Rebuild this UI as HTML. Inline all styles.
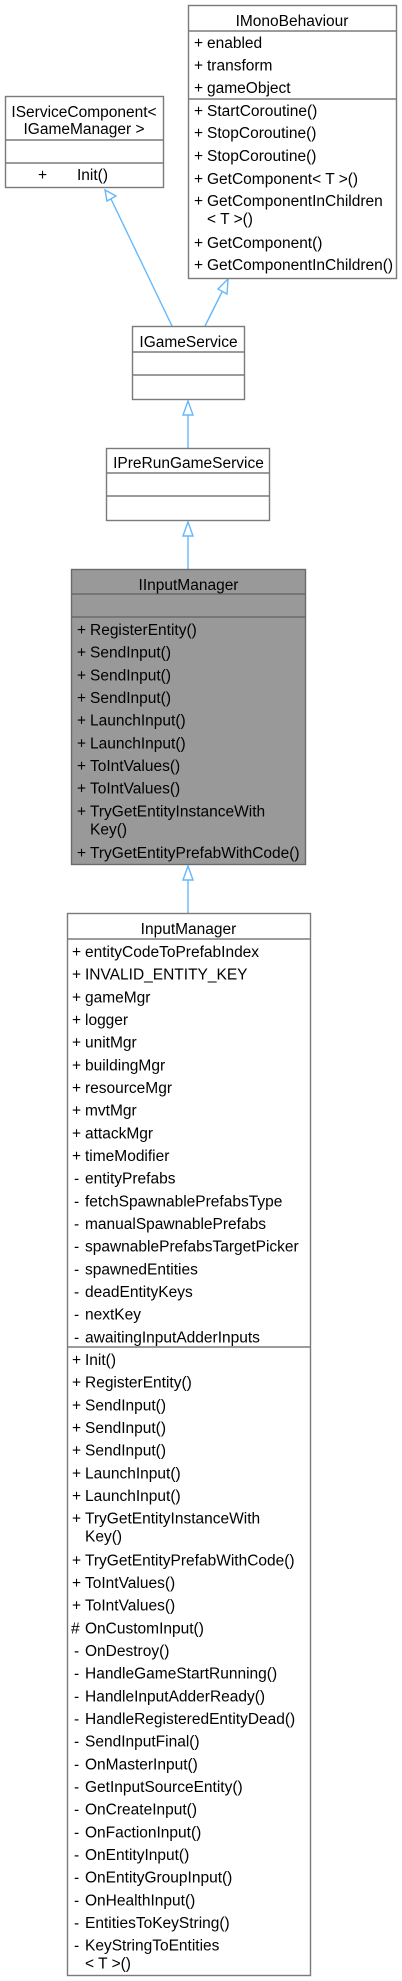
<!DOCTYPE html>
<html><head><meta charset="utf-8"><style>
html,body{margin:0;padding:0;background:#fff;}
svg{display:block;}
text{font-family:"Liberation Sans",Arial,sans-serif;font-size:15.5px;fill:#000;}
.b{fill:#fff;stroke:#7a7a7a;stroke-width:1.4;}
.g{fill:#999;stroke:#6a6a6a;stroke-width:1.4;}
.s{stroke:#7a7a7a;stroke-width:1.4;}
.s2{stroke:#6a6a6a;stroke-width:1.4;}
.e{stroke:#63b8ff;stroke-width:1.4;fill:none;}
.a{stroke:#63b8ff;stroke-width:1.4;fill:#fff;}
</style></head><body>
<svg width="402" height="1981" viewBox="0 0 402 1981" xmlns="http://www.w3.org/2000/svg">
<!-- edges -->
<line class="e" x1="111" y1="199" x2="172" y2="326"/>
<polygon class="a" points="105,190 107,201 116,196"/>
<line class="e" x1="222" y1="292" x2="205" y2="326"/>
<polygon class="a" points="228,279 218,289 227,294"/>
<line class="e" x1="188" y1="415" x2="188" y2="448"/>
<polygon class="a" points="188,401 183,415 193,415"/>
<line class="e" x1="188" y1="536" x2="188" y2="569"/>
<polygon class="a" points="188,522 183,536 193,536"/>
<line class="e" x1="188" y1="880" x2="188" y2="913"/>
<polygon class="a" points="188,866 183,880 193,880"/>

<!-- IMonoBehaviour -->
<rect class="b" x="188.5" y="5.5" width="208" height="273"/>
<line class="s" x1="188" y1="31" x2="396" y2="31"/>
<line class="s" x1="188" y1="99" x2="396" y2="99"/>
<text x="292" y="26" text-anchor="middle">IMonoBehaviour</text>
<g>
<text x="194" y="48">+</text><text x="207" y="48">enabled</text>
<text x="194" y="70.5">+</text><text x="207" y="70.5">transform</text>
<text x="194" y="93">+</text><text x="207" y="93">gameObject</text>
<text x="194" y="116">+</text><text x="207" y="116">StartCoroutine()</text>
<text x="194" y="138">+</text><text x="207" y="138">StopCoroutine()</text>
<text x="194" y="161">+</text><text x="207" y="161">StopCoroutine()</text>
<text x="194" y="184">+</text><text x="207" y="184">GetComponent&lt; T &gt;()</text>
<text x="194" y="206">+</text><text x="207" y="206">GetComponentInChildren</text>
<text x="207" y="224">&lt; T &gt;()</text>
<text x="194" y="248">+</text><text x="207" y="248">GetComponent()</text>
<text x="194" y="270">+</text><text x="207" y="270">GetComponentInChildren()</text>
</g>

<!-- IServiceComponent -->
<rect class="b" x="5.5" y="96.5" width="158" height="91"/>
<line class="s" x1="5" y1="140" x2="164" y2="140"/>
<line class="s" x1="5" y1="163" x2="164" y2="163"/>
<text x="84" y="117" text-anchor="middle">IServiceComponent&lt;</text>
<text x="84" y="134" text-anchor="middle">IGameManager &gt;</text>
<text x="38" y="180">+</text><text x="77" y="180">Init()</text>

<!-- IGameService -->
<rect class="b" x="132.5" y="326.5" width="112" height="73"/>
<line class="s" x1="132" y1="352" x2="245" y2="352"/>
<line class="s" x1="132" y1="375" x2="245" y2="375"/>
<text x="188.5" y="347" text-anchor="middle">IGameService</text>

<!-- IPreRunGameService -->
<rect class="b" x="106.5" y="448.5" width="163" height="72"/>
<line class="s" x1="106" y1="473" x2="270" y2="473"/>
<line class="s" x1="106" y1="496" x2="270" y2="496"/>
<text x="188.5" y="468" text-anchor="middle">IPreRunGameService</text>

<!-- IInputManager -->
<rect class="g" x="71.5" y="569.5" width="234" height="295"/>
<line class="s2" x1="71" y1="594" x2="306" y2="594"/>
<line class="s2" x1="71" y1="617" x2="306" y2="617"/>
<text x="188.5" y="590" text-anchor="middle">IInputManager</text>
<g>
<text x="77" y="635">+</text><text x="90" y="635">RegisterEntity()</text>
<text x="77" y="657.7">+</text><text x="90" y="657.7">SendInput()</text>
<text x="77" y="680.3">+</text><text x="90" y="680.3">SendInput()</text>
<text x="77" y="703">+</text><text x="90" y="703">SendInput()</text>
<text x="77" y="725.7">+</text><text x="90" y="725.7">LaunchInput()</text>
<text x="77" y="748.3">+</text><text x="90" y="748.3">LaunchInput()</text>
<text x="77" y="771">+</text><text x="90" y="771">ToIntValues()</text>
<text x="77" y="793.7">+</text><text x="90" y="793.7">ToIntValues()</text>
<text x="77" y="816.3">+</text><text x="90" y="816.3">TryGetEntityInstanceWith</text>
<text x="90" y="834.3">Key()</text>
<text x="77" y="858">+</text><text x="90" y="858">TryGetEntityPrefabWithCode()</text>
</g>

<!-- InputManager -->
<rect class="b" x="67.5" y="913.5" width="243" height="1062"/>
<line class="s" x1="67" y1="939" x2="311" y2="939"/>
<line class="s" x1="67" y1="1347" x2="311" y2="1347"/>
<text x="188.5" y="934" text-anchor="middle">InputManager</text>
<g>
<text x="72" y="957">+</text><text x="85" y="957">entityCodeToPrefabIndex</text>
<text x="72" y="979.7">+</text><text x="85" y="979.7">INVALID_ENTITY_KEY</text>
<text x="72" y="1002.3">+</text><text x="85" y="1002.3">gameMgr</text>
<text x="72" y="1025">+</text><text x="85" y="1025">logger</text>
<text x="72" y="1047.7">+</text><text x="85" y="1047.7">unitMgr</text>
<text x="72" y="1070.3">+</text><text x="85" y="1070.3">buildingMgr</text>
<text x="72" y="1093">+</text><text x="85" y="1093">resourceMgr</text>
<text x="72" y="1115.7">+</text><text x="85" y="1115.7">mvtMgr</text>
<text x="72" y="1138.3">+</text><text x="85" y="1138.3">attackMgr</text>
<text x="72" y="1161">+</text><text x="85" y="1161">timeModifier</text>
<text x="74" y="1183.7">-</text><text x="85" y="1183.7">entityPrefabs</text>
<text x="74" y="1206.3">-</text><text x="85" y="1206.3">fetchSpawnablePrefabsType</text>
<text x="74" y="1229">-</text><text x="85" y="1229">manualSpawnablePrefabs</text>
<text x="74" y="1251.7">-</text><text x="85" y="1251.7">spawnablePrefabsTargetPicker</text>
<text x="74" y="1274.3">-</text><text x="85" y="1274.3">spawnedEntities</text>
<text x="74" y="1297">-</text><text x="85" y="1297">deadEntityKeys</text>
<text x="74" y="1319.7">-</text><text x="85" y="1319.7">nextKey</text>
<text x="74" y="1342.3">-</text><text x="85" y="1342.3">awaitingInputAdderInputs</text>
</g>
<g>
<text x="72" y="1365">+</text><text x="85" y="1365">Init()</text>
<text x="72" y="1387.7">+</text><text x="85" y="1387.7">RegisterEntity()</text>
<text x="72" y="1410.3">+</text><text x="85" y="1410.3">SendInput()</text>
<text x="72" y="1433">+</text><text x="85" y="1433">SendInput()</text>
<text x="72" y="1455.7">+</text><text x="85" y="1455.7">SendInput()</text>
<text x="72" y="1478.3">+</text><text x="85" y="1478.3">LaunchInput()</text>
<text x="72" y="1501">+</text><text x="85" y="1501">LaunchInput()</text>
<text x="72" y="1523.7">+</text><text x="85" y="1523.7">TryGetEntityInstanceWith</text>
<text x="85" y="1541.7">Key()</text>
<text x="72" y="1565.3">+</text><text x="85" y="1565.3">TryGetEntityPrefabWithCode()</text>
<text x="72" y="1588">+</text><text x="85" y="1588">ToIntValues()</text>
<text x="72" y="1610.7">+</text><text x="85" y="1610.7">ToIntValues()</text>
<text x="71" y="1633.3">#</text><text x="85" y="1633.3">OnCustomInput()</text>
<text x="74" y="1656">-</text><text x="85" y="1656">OnDestroy()</text>
<text x="74" y="1678.7">-</text><text x="85" y="1678.7">HandleGameStartRunning()</text>
<text x="74" y="1701.3">-</text><text x="85" y="1701.3">HandleInputAdderReady()</text>
<text x="74" y="1724">-</text><text x="85" y="1724">HandleRegisteredEntityDead()</text>
<text x="74" y="1746.7">-</text><text x="85" y="1746.7">SendInputFinal()</text>
<text x="74" y="1769.3">-</text><text x="85" y="1769.3">OnMasterInput()</text>
<text x="74" y="1792">-</text><text x="85" y="1792">GetInputSourceEntity()</text>
<text x="74" y="1814.7">-</text><text x="85" y="1814.7">OnCreateInput()</text>
<text x="74" y="1837.3">-</text><text x="85" y="1837.3">OnFactionInput()</text>
<text x="74" y="1860">-</text><text x="85" y="1860">OnEntityInput()</text>
<text x="74" y="1882.7">-</text><text x="85" y="1882.7">OnEntityGroupInput()</text>
<text x="74" y="1905.3">-</text><text x="85" y="1905.3">OnHealthInput()</text>
<text x="74" y="1928">-</text><text x="85" y="1928">EntitiesToKeyString()</text>
<text x="74" y="1950.7">-</text><text x="85" y="1950.7">KeyStringToEntities</text>
<text x="85" y="1968.7">&lt; T &gt;()</text>
</g>
</svg>
</body></html>
